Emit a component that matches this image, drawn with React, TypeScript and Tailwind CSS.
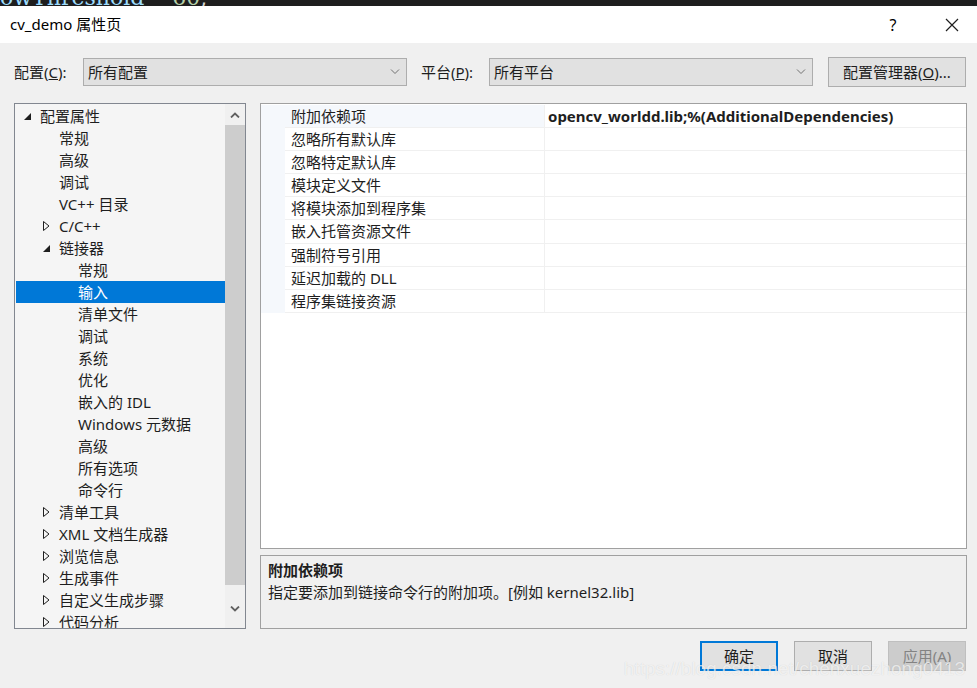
import type { ReactNode } from 'react';

const FONT = '[font-family:"Noto_Sans","Noto_Sans_CJK_SC",sans-serif]';

type TreeRow = { label: string; level: 0 | 1 | 2; expander?: 'open' | 'closed'; selected?: boolean };

const treeRows: TreeRow[] = [
  { label: '配置属性', level: 0, expander: 'open' },
  { label: '常规', level: 1 },
  { label: '高级', level: 1 },
  { label: '调试', level: 1 },
  { label: 'VC++ 目录', level: 1 },
  { label: 'C/C++', level: 1, expander: 'closed' },
  { label: '链接器', level: 1, expander: 'open' },
  { label: '常规', level: 2 },
  { label: '输入', level: 2, selected: true },
  { label: '清单文件', level: 2 },
  { label: '调试', level: 2 },
  { label: '系统', level: 2 },
  { label: '优化', level: 2 },
  { label: '嵌入的 IDL', level: 2 },
  { label: 'Windows 元数据', level: 2 },
  { label: '高级', level: 2 },
  { label: '所有选项', level: 2 },
  { label: '命令行', level: 2 },
  { label: '清单工具', level: 1, expander: 'closed' },
  { label: 'XML 文档生成器', level: 1, expander: 'closed' },
  { label: '浏览信息', level: 1, expander: 'closed' },
  { label: '生成事件', level: 1, expander: 'closed' },
  { label: '自定义生成步骤', level: 1, expander: 'closed' },
  { label: '代码分析', level: 1, expander: 'closed' },
];

const props = [
  '附加依赖项',
  '忽略所有默认库',
  '忽略特定默认库',
  '模块定义文件',
  '将模块添加到程序集',
  '嵌入托管资源文件',
  '强制符号引用',
  '延迟加载的 DLL',
  '程序集链接资源',
];

function Expander({ kind }: { kind: 'open' | 'closed' }) {
  if (kind === 'open') {
    return (
      <svg width="7" height="7" viewBox="0 0 7 7" className="mt-[1px]">
        <path d="M7 0 L7 7 L0 7 Z" fill="#1e1e1e" />
      </svg>
    );
  }
  return (
    <svg width="7" height="10" viewBox="0 0 7 10">
      <path d="M0.5 0.5 L6 5 L0.5 9.5 Z" fill="none" stroke="#1e1e1e" strokeWidth="1" />
    </svg>
  );
}

function Chevron({ up }: { up?: boolean }) {
  return (
    <svg width="10" height="6" viewBox="0 0 10 6">
      <path d={up ? 'M1 5.5 L5 1.5 L9 5.5' : 'M1 0.5 L5 4.5 L9 0.5'} fill="none" stroke="#606060" strokeWidth="1.8" />
    </svg>
  );
}

function Select({ value }: { value: string }) {
  return (
    <div className="flex h-[28px] w-[324px] items-center justify-between border border-[#adadad] bg-[#e1e1e1] pl-[4px] pr-[6px] text-[15px] text-[#1e1e1e]">
      <span>{value}</span>
      <svg width="10" height="6" viewBox="0 0 10 6">
        <path d="M1 0.5 L5 4.5 L9 0.5" fill="none" stroke="#707070" strokeWidth="1" />
      </svg>
    </div>
  );
}

function DialogButton({ children, variant }: { children: ReactNode; variant: 'default' | 'normal' | 'disabled' }) {
  const styles = {
    default: 'border-2 border-[#0078d7] bg-[#e1e1e1] text-[#1e1e1e]',
    normal: 'border border-[#adadad] bg-[#e1e1e1] text-[#1e1e1e]',
    disabled: 'border border-[#bfbfbf] bg-[#cccccc] text-[#838383]',
  }[variant];
  return (
    <div className={`flex h-[30px] w-[78px] items-center justify-center text-[15px] ${styles}`}>{children}</div>
  );
}

export default function App() {
  return (
    <div className={`relative h-[688px] w-[977px] overflow-hidden bg-[#f0f0f0] ${FONT}`}>
      {/* editor code peeking above the dialog */}
      <div className="h-[6px] overflow-hidden bg-[#1e1e1e]">
        <div className="-mt-[13px] whitespace-pre font-['DejaVu_Serif',serif] text-[22px] leading-[22px]">
          <span className="text-[#9cdcfe]">owThreshold</span>
          <span className="text-[#d4d4d4]">    </span>
          <span className="text-[#b5cea8]">60</span>
          <span className="text-[#d4d4d4]">;</span>
        </div>
      </div>

      {/* title bar */}
      <div className="flex h-[37px] items-center bg-white pl-[10px] text-[15px] text-black">
        <span className="flex-1">cv_demo 属性页</span>
        <span className="w-[20px] text-center text-[16px]">?</span>
        <svg width="14" height="14" viewBox="0 0 14 14" className="ml-[42px] mr-[18px]">
          <path d="M1 1 L13 13 M13 1 L1 13" stroke="#1e1e1e" strokeWidth="1.2" />
        </svg>
      </div>

      {/* config row */}
      <div className="flex items-center pl-[14px] pt-[14px] text-[15px] text-[#1e1e1e]">
        <span className="w-[69px]">
          配置(<span className="underline">C</span>):
        </span>
        <Select value="所有配置" />
        <span className="ml-[14px] w-[68px]">
          平台(<span className="underline">P</span>):
        </span>
        <Select value="所有平台" />
        <div className="ml-[15px] flex h-[30px] w-[138px] items-center justify-center border border-[#adadad] bg-[#e1e1e1]">
          配置管理器(<span className="underline">O</span>)...
        </div>
      </div>

      {/* main area */}
      <div className="mt-[16px] flex pl-[14px]">
        {/* tree */}
        <div className="flex h-[526px] w-[232px] border border-[#828790] bg-[#f5f5f5]">
          <div className="h-full flex-1 overflow-hidden pl-[1px] pt-[1px]">
            {treeRows.map((row, i) => (
              <div
                key={i}
                className={`flex h-[22px] items-center text-[15px] leading-[22px] ${
                  row.selected ? 'bg-[#0078d7] text-white' : 'text-[#1e1e1e]'
                }`}
                style={{ paddingLeft: 8 + row.level * 19 }}
              >
                <span className="flex w-[16px] shrink-0 items-center">
                  {row.expander && <Expander kind={row.expander} />}
                </span>
                <span className="whitespace-nowrap">{row.label}</span>
              </div>
            ))}
          </div>
          <div className="flex w-[20px] flex-col items-center bg-[#f0f0f0]">
            <div className="flex h-[21px] items-center">
              <Chevron up />
            </div>
            <div className="h-[460px] w-[20px] bg-[#cdcdcd]" />
            <div className="flex flex-1 items-center pt-[4px]">
              <Chevron />
            </div>
          </div>
        </div>

        {/* right column */}
        <div className="ml-[14px] flex w-[707px] flex-col">
          <div className="h-[446px] border border-[#a0a0a0] bg-white pt-[1px]">
            <div className="flex flex-col">
              {props.map((name, i) => (
                <div key={name} className="flex h-[23.1px] text-[15px] leading-[23px] text-[#1e1e1e]">
                  <div className="w-[24px] shrink-0 bg-[#f5f8fc]" />
                  <div
                    className={`w-[260px] shrink-0 border-b border-r border-[#f0f0f0] pl-[6px] ${
                      i === 0 ? 'bg-[#f5f8fc]' : 'bg-white'
                    }`}
                  >
                    {name}
                  </div>
                  <div className="flex-1 border-b border-[#f0f0f0] pl-[3px] font-bold">
                    {i === 0 ? 'opencv_worldd.lib;%(AdditionalDependencies)' : ''}
                  </div>
                </div>
              ))}
            </div>
          </div>

          <div className="mt-[6px] h-[74px] border border-[#a0a0a0] bg-[#f0f0f0] px-[7px] pt-[3px] text-[15px] leading-[22px] text-[#1e1e1e]">
            <div className="font-bold">附加依赖项</div>
            <div>指定要添加到链接命令行的附加项。[例如 kernel32.lib]</div>
          </div>

          <div className="mt-[12px] flex justify-end gap-[16px] pr-[1px]">
            <DialogButton variant="default">确定</DialogButton>
            <DialogButton variant="normal">取消</DialogButton>
            <DialogButton variant="disabled">应用(A)</DialogButton>
          </div>
        </div>
      </div>

      {/* blog watermark */}
      <div className="pointer-events-none absolute right-[12px] top-[655px] font-['Liberation_Sans',sans-serif] text-[19px] text-white/70 [text-shadow:0_0_1px_rgba(0,0,0,0.15)]">
        https://blog.csdn.net/chenxuezhong0413
      </div>
    </div>
  );
}
